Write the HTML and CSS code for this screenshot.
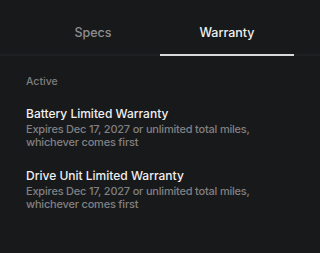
FILE: index.html
```html
<!DOCTYPE html>
<html>
<head>
<meta charset="utf-8">
<link rel="stylesheet" href="styles.css">
</head>
<body>
<div class="page">
  <div class="tabs">
    <div class="tab">Specs</div>
    <div class="tab active">Warranty</div>
  </div>
  <div class="content">
    <div class="section-label">Active</div>
    <div class="item">
      <div class="item-title">Battery Limited Warranty</div>
      <div class="item-desc">Expires Dec 17, 2027 or unlimited total miles,<br>whichever comes first</div>
    </div>
    <div class="item">
      <div class="item-title">Drive Unit Limited Warranty</div>
      <div class="item-desc">Expires Dec 17, 2027 or unlimited total miles,<br>whichever comes first</div>
    </div>
  </div>
</div>
</body>
</html>
```

FILE: styles.css
```css
html, body {
  margin: 0;
  padding: 0;
  background: #18191b;
}
.page {
  width: 320px;
  height: 253px;
  background: #18191b;
  font-family: Inter, "Noto Sans", sans-serif;
  color: #e8e8e8;
  overflow: hidden;
}
.tabs {
  display: flex;
  padding: 0 26px;
  height: 54px;
  border-bottom: 2px solid #1e1f22;
}
.tab {
  flex: 1;
  display: flex;
  align-items: center;
  justify-content: center;
  padding-top: 10px;
  font-size: 12.5px;
  font-weight: 500;
  color: #8e8e90;
  border-bottom: 2px solid transparent;
  margin-bottom: -2px;
}
.tab.active {
  color: #f0f0f0;
  border-bottom-color: #d8d8d8;
}
.content {
  padding: 19px 26px 0;
}
.section-label {
  font-size: 10.5px;
  font-weight: 500;
  color: #7e7e80;
  line-height: 13px;
}
.item {
  margin-top: 18px;
}
.item + .item {
  margin-top: 19px;
}
.item-title {
  font-size: 12px;
  font-weight: 500;
  color: #f0f0f0;
  line-height: 16px;
}
.item-desc {
  font-size: 11px;
  font-weight: 500;
  letter-spacing: -0.2px;
  color: #808082;
  line-height: 13px;
  margin-top: 1px;
}
```
